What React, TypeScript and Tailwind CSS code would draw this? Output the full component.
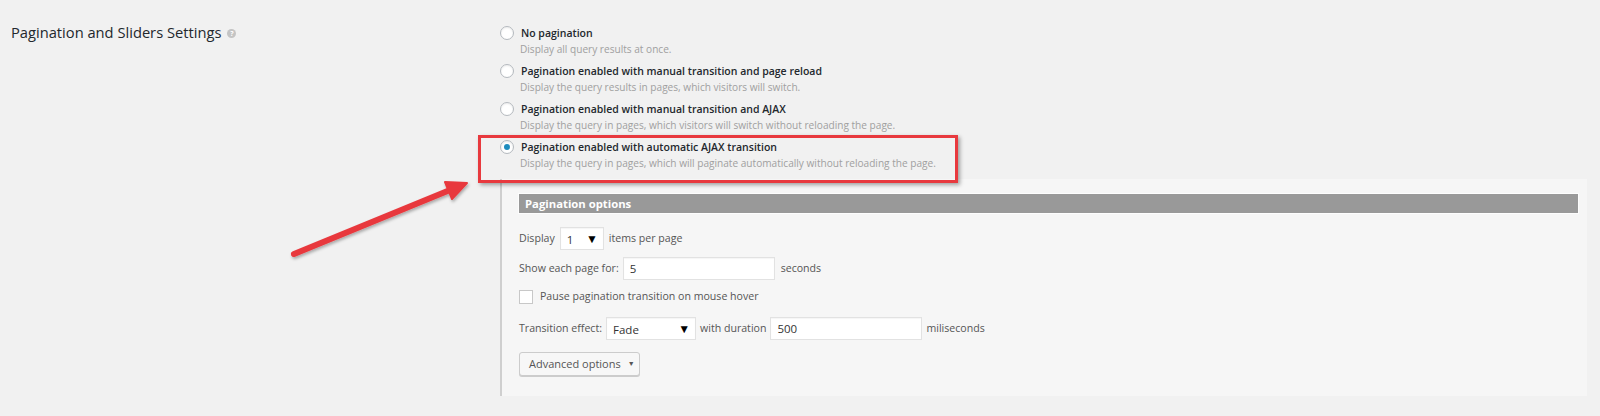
import React from 'react';

const options = [
  { label: 'No pagination', desc: 'Display all query results at once.' },
  {
    label: 'Pagination enabled with manual transition and page reload',
    desc: 'Display the query results in pages, which visitors will switch.',
  },
  {
    label: 'Pagination enabled with manual transition and AJAX',
    desc: 'Display the query in pages, which visitors will switch without reloading the page.',
  },
  {
    label: 'Pagination enabled with automatic AJAX transition',
    desc: 'Display the query in pages, which will paginate automatically without reloading the page.',
    checked: true,
  },
];

const Radio = ({ checked }: { checked?: boolean }) => (
  <span className="mt-[1px] flex h-[14px] w-[14px] shrink-0 items-center justify-center rounded-full border border-[#b4b9be] bg-white shadow-[inset_0_1px_2px_rgba(0,0,0,0.08)]">
    {checked && <span className="h-[6px] w-[6px] rounded-full bg-[#1e8cbe]" />}
  </span>
);

const Select = ({ value, width }: { value: string; width: string }) => (
  <span
    className={`flex h-[23px] ${width} items-center justify-between border border-[#e2e2e2] bg-white pl-[6px] pr-[5px] text-[11.5px] text-[#333] shadow-[inset_0_1px_1px_rgba(0,0,0,0.04)]`}
  >
    <span className="pt-[2px]">{value}</span>
    <span className="text-[12px] leading-none text-black">▼</span>
  </span>
);

const TextInput = ({ value }: { value: string }) => (
  <span className="flex h-[23px] w-[152px] items-center border border-[#e2e2e2] bg-white pl-[6px] text-[11.5px] text-[#333] shadow-[inset_0_1px_1px_rgba(0,0,0,0.04)]">
    {value}
  </span>
);

export default function App() {
  return (
    <div className="relative h-[416px] w-[1600px] overflow-hidden bg-[#f1f1f1] font-['Open_Sans','Noto_Sans',sans-serif]">
      <div className="flex">
        {/* Section title */}
        <div className="w-[500px] shrink-0 pl-[11px] pt-[22px]">
          <h2 className="flex items-center text-[14.7px] leading-[20px] font-normal text-[#23282d]">
            Pagination and Sliders Settings
            <span className="ml-[6px] mt-[2px] flex h-[9px] w-[9px] items-center justify-center rounded-full bg-[#c4c4c4] text-[7px] leading-none font-bold text-white">
              ?
            </span>
          </h2>
        </div>

        {/* Options column */}
        <div className="flex-1 pt-[25px] pr-[13px]">
          <div className="flex flex-col gap-[6px]">
            {options.map((opt) => (
              <div key={opt.label} className="relative">
                <div className="flex items-start gap-[7px]">
                  <Radio checked={opt.checked} />
                  <span className="text-[10.5px] leading-[16px] font-semibold text-[#23282d]">{opt.label}</span>
                </div>
                <p className="pl-[20px] text-[10.1px] leading-[16px] text-[#a0a0a0]">{opt.desc}</p>
                {opt.checked && (
                  <div className="pointer-events-none absolute -left-[22px] -top-[4px] h-[48px] w-[480px] border-[3px] border-[#e8393e] shadow-[2px_2px_4px_rgba(0,0,0,0.35)]" />
                )}
              </div>
            ))}
          </div>

          {/* Pagination options panel */}
          <div className="mt-[8px] border-l-[2px] border-[#cfcfcf] bg-[#f6f6f6] pt-[15px] pr-[9px] pb-[20px] pl-[17px] text-[10.6px] text-[#555]">
            <div className="h-[19px] bg-[#999999] pl-[6px] text-[11.3px] leading-[19px] font-bold text-white ring-1 ring-white/80">
              Pagination options
            </div>

            <div className="mt-[14px] flex items-center gap-[5px]">
              <span>Display</span>
              <Select value="1" width="w-[44px]" />
              <span>items per page</span>
            </div>

            <div className="mt-[7px] flex items-center gap-[4px]">
              <span>Show each page for:</span>
              <TextInput value="5" />
              <span className="ml-[2px]">seconds</span>
            </div>

            <label className="mt-[10px] flex h-[14px] items-center gap-[7px]">
              <span className="h-[14px] w-[14px] border border-[#c8c8c8] bg-white" />
              <span>Pause pagination transition on mouse hover</span>
            </label>

            <div className="mt-[13px] flex items-center gap-[4px]">
              <span>Transition effect:</span>
              <Select value="Fade" width="w-[90px]" />
              <span>with duration</span>
              <TextInput value="500" />
              <span>miliseconds</span>
            </div>

            <button className="mt-[12px] flex h-[24px] w-[121px] items-center gap-[7px] rounded-[3px] border border-[#cccccc] bg-[#f7f7f7] pl-[9px] text-[11px] whitespace-nowrap text-[#555] shadow-[0_1px_0_#cccccc]">
              Advanced options
              <span className="text-[7px]">▼</span>
            </button>
          </div>
        </div>
      </div>

      {/* Annotation arrow */}
      <svg className="pointer-events-none absolute top-0 left-0" width="1600" height="416">
        <defs>
          <filter id="arrowShadow" x="-10%" y="-10%" width="130%" height="140%">
            <feDropShadow dx="1" dy="2" stdDeviation="1.5" floodColor="#000" floodOpacity="0.3" />
          </filter>
        </defs>
        <g filter="url(#arrowShadow)" fill="#e8393e" stroke="#e8393e">
          <line x1="294" y1="254" x2="450" y2="190" strokeWidth="6" strokeLinecap="round" />
          <polygon points="467,183 445,182 452,199" strokeWidth="2" strokeLinejoin="round" />
        </g>
      </svg>
    </div>
  );
}
